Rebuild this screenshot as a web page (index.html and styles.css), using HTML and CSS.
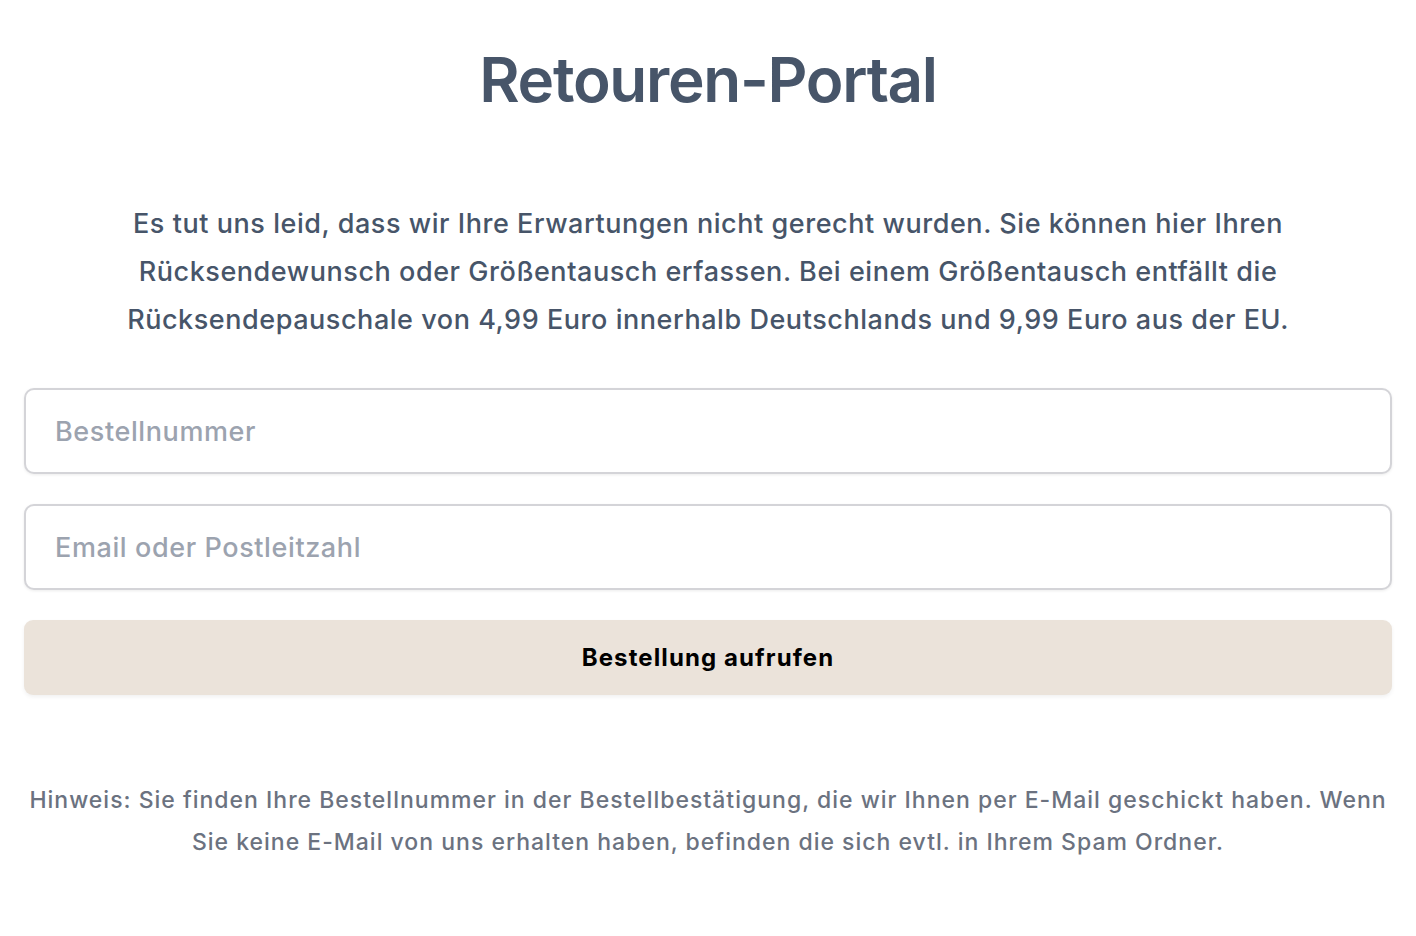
FILE: index.html
```html
<!DOCTYPE html>
<html lang="de">
  <head>
    <meta charset="UTF-8">
    <title>Retouren-Portal</title>
    <link rel="stylesheet" href="styles.css">
  </head>
  <body>
    <div id="container">
      <!-- Title -->
      <h1 class="title">Retouren-Portal</h1>

      <!-- Intro text -->
      <p class="intro">Es tut uns leid, dass wir Ihre Erwartungen nicht gerecht wurden. Sie können hier Ihren Rücksendewunsch oder Größentausch erfassen. Bei einem Größentausch entfällt die Rücksendepauschale von 4,99 Euro innerhalb Deutschlands und 9,99 Euro aus der EU.</p>

      <!-- Lookup form -->
      <form class="lookup">
        <input type="text" class="field" placeholder="Bestellnummer">
        <input type="text" class="field" placeholder="Email oder Postleitzahl">
        <button type="button" class="submit">Bestellung aufrufen</button>
      </form>

      <!-- Hint -->
      <p class="hint">Hinweis: Sie finden Ihre Bestellnummer in der Bestellbestätigung, die wir Ihnen per E-Mail geschickt haben. Wenn Sie keine E-Mail von uns erhalten haben, befinden die sich evtl. in Ihrem Spam Ordner.</p>
    </div>
  </body>
</html>
```

FILE: styles.css
```css
body {
  font-family: Inter, "Noto Sans", sans-serif;
  margin: 0;
  background-color: #ffffff;
}
#container {
  padding: 0 24px;
}
.title {
  margin: 44px 0 0;
  text-align: center;
  font-size: 62px;
  font-weight: 600;
  line-height: 72px;
  color: #475569;
  letter-spacing: -1.3px;
}
.intro {
  max-width: 1180px;
  margin: 84px auto 0;
  text-align: center;
  font-size: 27px;
  font-weight: 500;
  line-height: 48px;
  letter-spacing: 0.55px;
  color: #475569;
}
.lookup {
  display: flex;
  flex-direction: column;
  gap: 30px;
  margin-top: 44px;
}
.field {
  height: 86px;
  padding: 0 29px;
  border: 2px solid #d4d4d8;
  border-radius: 10px;
  box-shadow: 0 1px 3px rgba(0, 0, 0, 0.08);
  font-family: inherit;
  font-size: 27px;
  font-weight: 500;
  letter-spacing: 0.6px;
  color: #374151;
  box-sizing: border-box;
  outline: none;
}
.field::placeholder {
  color: #9ca3af;
}
.submit {
  height: 75px;
  border: none;
  border-radius: 9px;
  background-color: #ebe3da;
  box-shadow: 0 2px 4px rgba(0, 0, 0, 0.06);
  font-family: inherit;
  font-size: 24px;
  font-weight: 700;
  letter-spacing: 1.1px;
  color: #000000;
}
.hint {
  margin: 84px 0 0;
  text-align: center;
  font-size: 23px;
  font-weight: 500;
  line-height: 42px;
  letter-spacing: 1px;
  color: #6b7280;
}
```
